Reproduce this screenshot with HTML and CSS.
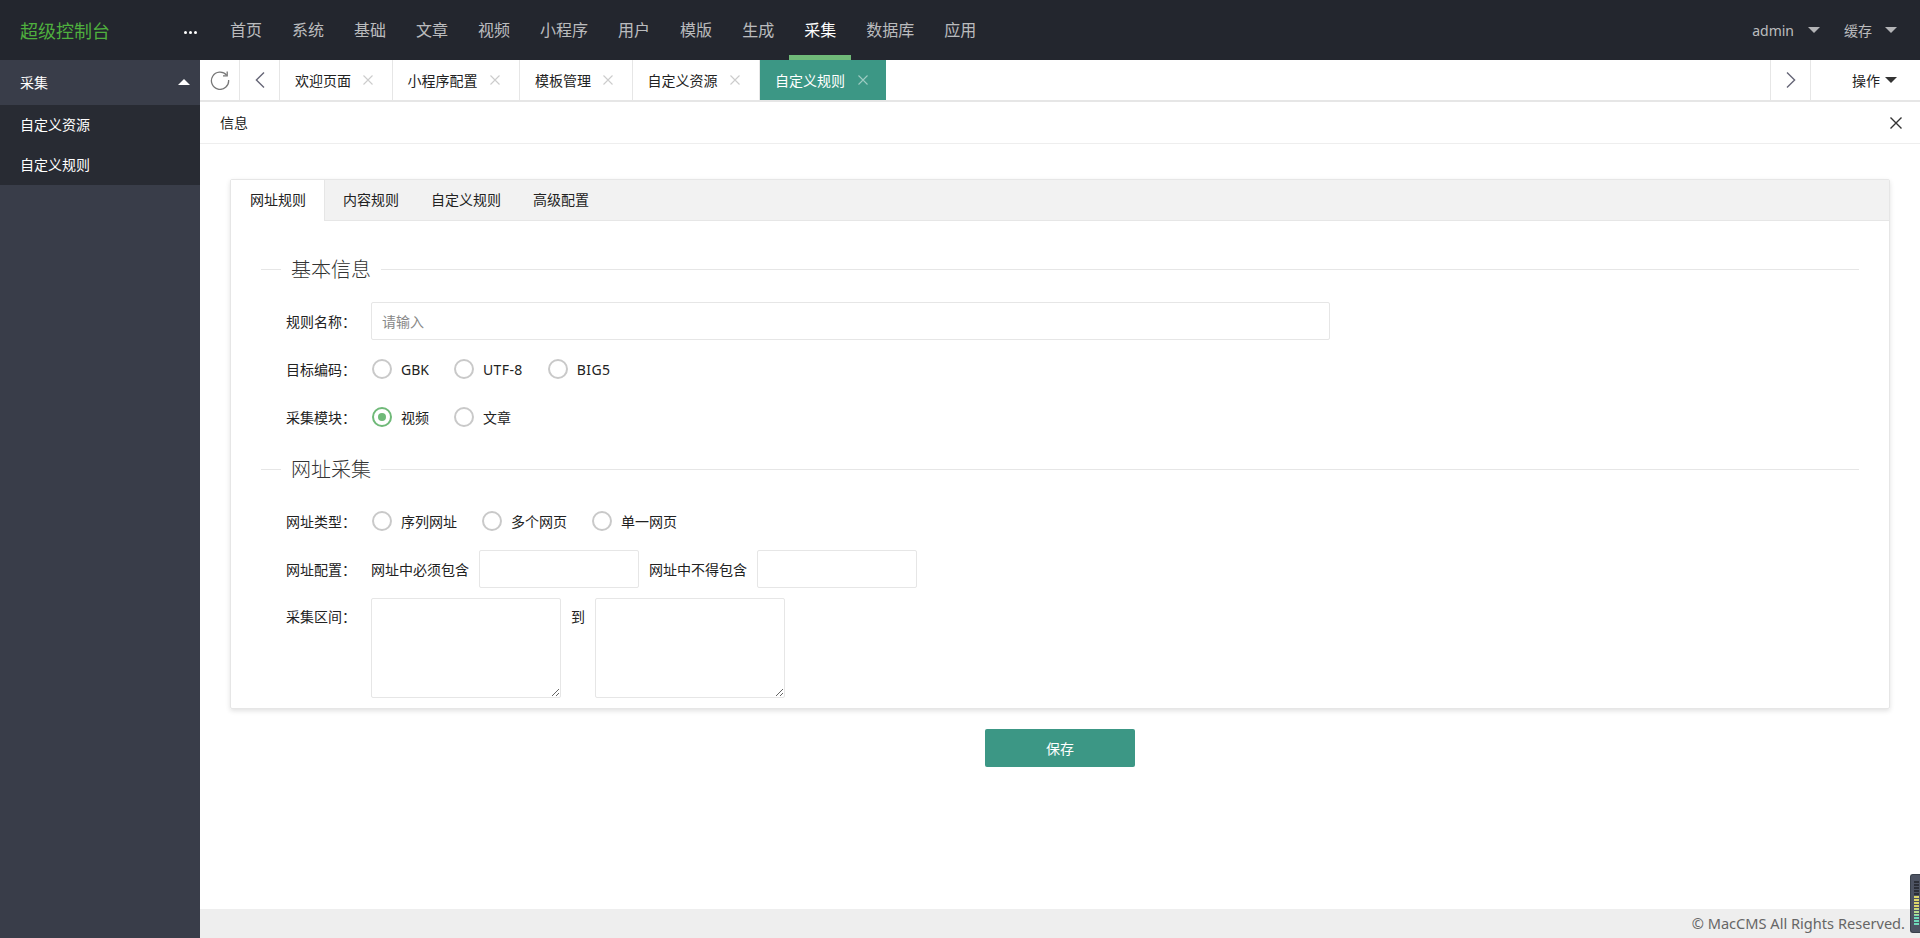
FILE: index.html
```html
<!DOCTYPE html>
<html lang="zh-CN">
<head>
<meta charset="utf-8">
<title>超级控制台</title>
<link rel="stylesheet" href="styles.css">
</head>
<body>
<header class="topbar">
  <div class="brand">
    <span class="logo">超级控制台</span>
    <svg class="dots" width="13" height="3" viewBox="0 0 13 3"><circle cx="1.5" cy="1.5" r="1.5"/><circle cx="6.5" cy="1.5" r="1.5"/><circle cx="11.5" cy="1.5" r="1.5"/></svg>
  </div>
  <nav class="mainnav">
    <a>首页</a><a>系统</a><a>基础</a><a>文章</a><a>视频</a><a>小程序</a><a>用户</a><a>模版</a><a>生成</a><a class="on">采集</a><a>数据库</a><a>应用</a>
  </nav>
  <div class="usernav">
    <span class="useritem">admin<i class="tri down soft"></i></span>
    <span class="useritem cache">缓存<i class="tri down soft"></i></span>
  </div>
</header>
<div class="shell">
  <aside class="side">
    <div class="sidehead"><span>采集</span><i class="tri up"></i></div>
    <ul class="sublist">
      <li>自定义资源</li>
      <li>自定义规则</li>
    </ul>
  </aside>
  <main class="main">
    <div class="tabbar">
      <button class="iconbtn">
        <svg width="20" height="20" viewBox="0 0 20 20" fill="none" stroke="#777" stroke-width="1.3"><path d="M16.6 5.2A8.6 8.6 0 1 0 18.6 10"/><path d="M17.2 1.6V5.8H13"/></svg>
      </button>
      <button class="iconbtn">
        <svg width="10" height="16" viewBox="0 0 10 16" fill="none" stroke="#667" stroke-width="1.4"><path d="M9 .6 1.4 8 9 15.4"/></svg>
      </button>
      <div class="tabs">
        <span class="tab">欢迎页面<svg class="x" viewBox="0 0 10 10"><path d="M.5.5l9 9M9.5.5l-9 9"/></svg></span>
        <span class="tab long">小程序配置<svg class="x" viewBox="0 0 10 10"><path d="M.5.5l9 9M9.5.5l-9 9"/></svg></span>
        <span class="tab">模板管理<svg class="x" viewBox="0 0 10 10"><path d="M.5.5l9 9M9.5.5l-9 9"/></svg></span>
        <span class="tab long">自定义资源<svg class="x" viewBox="0 0 10 10"><path d="M.5.5l9 9M9.5.5l-9 9"/></svg></span>
        <span class="tab active">自定义规则<svg class="x" viewBox="0 0 10 10"><path d="M.5.5l9 9M9.5.5l-9 9"/></svg></span>
      </div>
      <button class="iconbtn next">
        <svg width="10" height="16" viewBox="0 0 10 16" fill="none" stroke="#667" stroke-width="1.4"><path d="M1 .6 8.6 8 1 15.4"/></svg>
      </button>
      <div class="ops">操作<i class="tri down dark"></i></div>
    </div>
    <div class="pagetitle">
      <span class="pagename">信息</span>
      <svg width="12" height="12" viewBox="0 0 12 12" fill="none" stroke="#333" stroke-width="1.4"><path d="M.5.5l11 11M11.5.5l-11 11"/></svg>
    </div>
    <div class="content">
      <section class="card">
        <ul class="cardtabs">
          <li class="current">网址规则</li>
          <li>内容规则</li>
          <li>自定义规则</li>
          <li>高级配置</li>
        </ul>
        <div class="cardbody">
          <div class="legend"><span>基本信息</span></div>
          <div class="row first">
            <label class="lab">规则名称：</label>
            <input class="input wide" type="text" placeholder="请输入">
          </div>
          <div class="row">
            <label class="lab">目标编码：</label>
            <div class="radios">
              <span class="radio"><i></i>GBK</span>
              <span class="radio latin"><i></i>UTF-8</span>
              <span class="radio latin"><i></i>BIG5</span>
            </div>
          </div>
          <div class="row">
            <label class="lab">采集模块：</label>
            <div class="radios">
              <span class="radio checked"><i></i>视频</span>
              <span class="radio"><i></i>文章</span>
            </div>
          </div>
          <div class="legend"><span>网址采集</span></div>
          <div class="row first">
            <label class="lab">网址类型：</label>
            <div class="radios">
              <span class="radio"><i></i>序列网址</span>
              <span class="radio"><i></i>多个网页</span>
              <span class="radio"><i></i>单一网页</span>
            </div>
          </div>
          <div class="row">
            <label class="lab">网址配置：</label>
            <span class="inlinetext">网址中必须包含</span>
            <input class="input small" type="text">
            <span class="inlinetext second">网址中不得包含</span>
            <input class="input small" type="text">
          </div>
          <div class="row top last">
            <label class="lab">采集区间：</label>
            <textarea class="area"></textarea>
            <span class="to">到</span>
            <textarea class="area"></textarea>
          </div>
        </div>
      </section>
      <div class="actions"><button class="save">保存</button></div>
    </div>
    <footer class="foot">© MacCMS All Rights Reserved.</footer>
  </main>
</div>
<div class="meter"><div class="leds"></div></div>
</body>
</html>
```
FILE: styles.css
```css
* { box-sizing: border-box; }
html, body { margin: 0; padding: 0; height: 938px; overflow: hidden; }
body { font-family: "Noto Sans", "Noto Sans CJK SC", sans-serif; font-size: 14px; color: #222; background: #fff; }
ul { list-style: none; margin: 0; padding: 0; }
button { font: inherit; border: 0; background: none; padding: 0; }

.tri { display: inline-block; width: 0; height: 0; border-left: 6px solid transparent; border-right: 6px solid transparent; }
.tri.down { border-top: 6px solid #fff; }
.tri.up { border-bottom: 6px solid #fff; }
.tri.soft { border-top-color: #b3b4b7; }
.tri.dark { border-top-color: #333; }

.topbar { height: 60px; background: #23262e; display: flex; align-items: center; }
.brand { width: 215px; padding-left: 20px; display: flex; align-items: center; flex: none; }
.logo { font-size: 18px; color: #4fb03e; width: 164px; }
.dots { fill: #fff; margin-top: 5px; }
.mainnav { display: flex; height: 60px; }
.mainnav a { position: relative; padding: 0 15px; font-size: 16px; line-height: 60px; color: rgba(255,255,255,.7); }
.mainnav a.on { color: #fff; }
.mainnav a.on::after { content: ""; position: absolute; left: 0; right: 0; bottom: 0; height: 5px; background: #6fb978; }
.usernav { margin-left: auto; display: flex; padding-right: 23px; }
.useritem { display: flex; align-items: center; color: rgba(255,255,255,.7); margin-left: 24px; }
.useritem .tri { margin-left: 14px; }
.useritem.cache .tri { margin-left: 13px; }

.shell { display: flex; height: 878px; }
.side { width: 200px; flex: none; background: #393d49; color: #fff; }
.sidehead { height: 45px; padding: 0 10px 2px 20px; display: flex; align-items: center; justify-content: space-between; }
.sublist { background: #282b33; }
.sublist li { height: 40px; line-height: 40px; padding-left: 20px; }

.main { flex: 1; display: flex; flex-direction: column; min-width: 0; }
.tabbar { height: 42px; flex: none; display: flex; border-bottom: 2px solid #e6e6e6; }
.iconbtn { width: 40px; flex: none; display: flex; align-items: center; justify-content: center; border-right: 1px solid #e6e6e6; }
.iconbtn.next { border-left: 1px solid #e6e6e6; width: 41px; }
.tabs { flex: 1; display: flex; min-width: 0; }
.tab { display: flex; align-items: center; padding: 0 18.5px 0 15px; border-right: 1px solid #e6e6e6; color: #222; }
.tab.long { padding-right: 19.5px; }
.tab .x { width: 10px; height: 10px; margin-left: 12px; fill: none; stroke: #ccc; stroke-width: 1.1; }
.tab.active { background: #3c9785; color: #fff; padding-right: 18px; border-right: 0; }
.tab.active .x { margin-left: 13px; stroke: rgba(255,255,255,.5); }
.ops { width: 109px; flex: none; display: flex; align-items: center; justify-content: flex-end; padding-right: 23px; color: #222; }
.ops .tri { margin-left: 5px; }

.pagetitle { height: 42px; flex: none; display: flex; align-items: center; justify-content: space-between; padding: 0 18px 0 20px; border-bottom: 1px solid #eee; }
.pagename { margin-top: -2px; }
.content { flex: 1; padding: 35px 30px 0 30px; }
.card { border: 1px solid #e6e6e6; box-shadow: 0 2px 5px rgba(0,0,0,.12); border-radius: 2px; }
.cardtabs { display: flex; height: 41px; background: #f2f2f2; border-bottom: 1px solid #e6e6e6; }
.cardtabs li { line-height: 40px; padding: 0 16px; }
.cardtabs li:nth-child(2) { padding-left: 18px; }
.cardtabs li.current { background: #fff; height: 41px; padding: 0 18px 0 19px; border-right: 1px solid #e6e6e6; }
.cardbody { padding: 34px 30px 10px; }

.legend { display: flex; align-items: center; height: 28px; font-size: 20px; font-weight: 300; color: #333; line-height: 28px; }
.legend::before { content: ""; width: 20px; height: 1px; background: #e6e6e6; }
.legend::after { content: ""; flex: 1; height: 1px; background: #e6e6e6; }
.legend span { padding: 2px 10px 0; }
.row + .legend { margin-top: 19px; }

.row { display: flex; align-items: center; min-height: 38px; margin-bottom: 10px; }
.legend + .row { margin-top: 19px; }
.row.top { align-items: flex-start; }
.row.last { margin-bottom: 0; }
.row.top .lab, .row.top .to { line-height: 38px; }
.lab { width: 110px; flex: none; padding-left: 25px; }
.input { height: 38px; border: 1px solid #e6e6e6; border-radius: 2px; background: #fff; padding: 0 10px; font: inherit; outline: 0; }
.input::placeholder { color: #888; }
.input.wide { width: 959px; }
.input.small { width: 160px; margin-left: 10px; }
.inlinetext.second { margin-left: 10px; }
.radios { display: flex; margin-left: 1px; }
.radio { display: flex; align-items: center; margin-right: 25px; }
.radio.latin { letter-spacing: .4px; }
.radio i { width: 20px; height: 20px; border: 2px solid #c9c9c9; border-radius: 50%; margin-right: 9px; display: flex; align-items: center; justify-content: center; }
.radio.checked i { border-color: #6fb978; }
.radio.checked i::after { content: ""; width: 8px; height: 8px; border-radius: 50%; background: #6fb978; }
.area { width: 190px; height: 100px; border: 1px solid #e6e6e6; border-radius: 2px; margin: 0; font: inherit; outline: 0; display: block; }
.to { margin: 0 10px; }

.actions { display: flex; justify-content: center; margin-top: 20px; }
.save { width: 150px; height: 38px; background: #3c9785; color: #fff; border-radius: 2px; }
.foot { height: 29px; flex: none; background: #eee; color: #666; font-size: 14.6px; line-height: 29px; text-align: right; padding-right: 15px; }

.meter { position: fixed; left: 1910px; top: 874px; width: 10px; height: 59px; background: #4d5362; border-radius: 3px 0 0 3px; border: 1px solid #39404b; border-right: 0; }
.leds { position: absolute; left: 3px; top: 6px; width: 5px; height: 45px; background: linear-gradient(#2c2f38 0 33%, #dcd66a 33% 62%, #b4dc8c 62% 75%, #6fd9b8 75% 100%); }
.leds::after { content: ""; position: absolute; inset: 0; background: repeating-linear-gradient(transparent 0 2px, #4d5362 2px 3px); }
```
